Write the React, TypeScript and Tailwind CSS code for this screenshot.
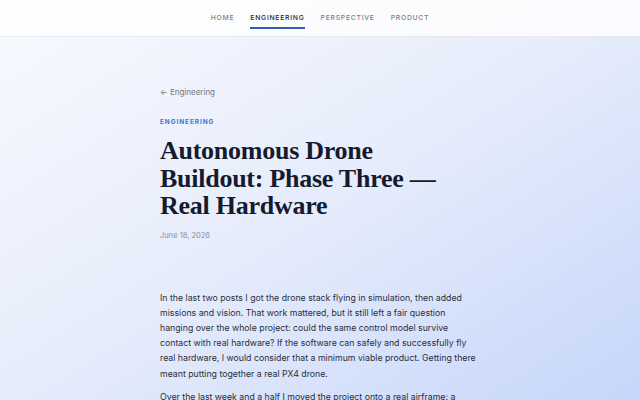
import React from 'react';

const navItems = [
  { label: 'HOME', active: false },
  { label: 'ENGINEERING', active: true },
  { label: 'PERSPECTIVE', active: false },
  { label: 'PRODUCT', active: false },
];

const intro = [
  'In the last two posts I got the drone stack flying in simulation, then added',
  'missions and vision. That work mattered, but it still left a fair question',
  'hanging over the whole project: could the same control model survive',
  'contact with real hardware? If the software can safely and successfully fly',
  'real hardware, I would consider that a minimum viable product. Getting there',
  'meant putting together a real PX4 drone.',
];

export default function App() {
  return (
    <div
      className="h-screen overflow-hidden w-full bg-gradient-to-br from-[#f9faff] via-[#e6ecfb] to-[#c6d6fa]"
      style={{ fontFamily: 'Inter, "Noto Sans", sans-serif' }}
    >
      <header className="h-[37px] border-b border-[#e6e9f1] bg-white/80 flex justify-center items-start">
        <nav className="flex gap-[16px] pt-[12px]">
          {navItems.map((item) => (
            <div key={item.label} className="flex flex-col items-center">
              <span
                className={`text-[6.8px] font-medium tracking-[0.11em] leading-[11px] ${
                  item.active ? 'text-[#1f2430]' : 'text-[#7a7f8c]'
                }`}
              >
                {item.label}
              </span>
              {item.active && <span className="mt-[4px] h-[1.5px] w-full bg-[#2f5fb8]" />}
            </div>
          ))}
        </nav>
      </header>

      <main className="mx-auto w-[320px] pt-[49px] pb-10">
        <a className="block text-[8px] text-[#737884] leading-[12px]">← Engineering</a>

        <div className="mt-[19px] text-[6.5px] font-bold tracking-[0.14em] text-[#3f74d8] leading-[10px]">
          ENGINEERING
        </div>

        <h1
          className="mt-[10px] text-[26px] font-bold leading-[27.5px] text-[#151b2c] tracking-[-0.01em]"
          style={{ fontFamily: '"Liberation Serif", "DejaVu Serif", serif' }}
        >
          Autonomous Drone
          <br />
          Buildout: Phase Three —
          <br />
          Real Hardware
        </h1>

        <div className="mt-[10px] text-[7.5px] text-[#8a8f9b] leading-[12px]">June 18, 2026</div>

        <article className="mt-[49px] text-[8.75px] leading-[15.2px] text-[#2a2f3c]">
          <p className="whitespace-nowrap">
            {intro.map((line, i) => (
              <React.Fragment key={i}>
                {line}
                {i < intro.length - 1 && <br />}
              </React.Fragment>
            ))}
          </p>
          <p className="mt-[8px]">
            Over the last week and a half I moved the project onto a real airframe: a custom quadcopter
            build with a flight controller, GPS, telemetry radio and companion computer.
          </p>
        </article>
      </main>
    </div>
  );
}
